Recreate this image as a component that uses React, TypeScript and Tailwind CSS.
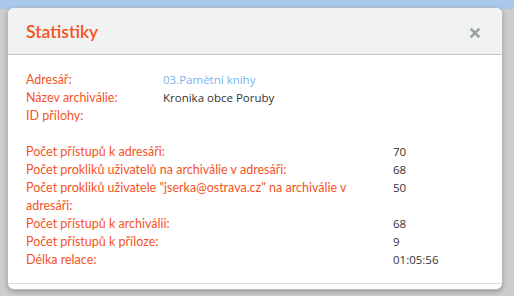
import React from "react";

const font = { fontFamily: 'Lato, "Open Sans", sans-serif' };
const valFont = { fontFamily: '"Open Sans", "Liberation Sans", sans-serif' };

function Row({ label, value, valueClass = "text-[#333]", wide = false }: { label: string; value?: string; valueClass?: string; wide?: boolean }) {
  return (
    <div className="flex">
      <div className={wide ? "w-[367px] pr-[10px] text-[#f5531f]" : "w-[137px] text-[#f5531f]"}>{label}</div>
      <div className={valueClass + " text-[11.5px]"} style={valFont}>{value}</div>
    </div>
  );
}

export default function App() {
  return (
    <div className="relative w-[514px] h-[296px] bg-[#cdcdcd] overflow-hidden" style={font}>
      <div className="absolute left-0 top-0 w-full h-[9px] bg-[#a8c9ea]" />
      <div className="relative ml-[7px] pt-[7px]">
        <div className="w-[496px] h-[283px] rounded-[7px] border border-[#b8bbbb] bg-white shadow-[0_2px_4px_rgba(0,0,0,0.25)] overflow-hidden flex flex-col">
          <div className="h-[47px] bg-[#f1f2f2] border-b border-[#c3c6c6] flex items-center justify-between pl-[18px] pr-[22px]">
            <div className="text-[17.5px] text-[#f5531f] leading-none pt-[2px] font-semibold">Statistiky</div>
            <svg width="10" height="10" viewBox="0 0 10 10" className="mt-[3px]">
              <path d="M1.5 1.5 L8.5 8.5 M8.5 1.5 L1.5 8.5" stroke="#9ca1a1" strokeWidth="2.6" strokeLinecap="square" />
            </svg>
          </div>
          <div className="flex-1 pl-[18px] pt-[16px] text-[12.5px] leading-[18px]">
            <Row label="Adresář:" value="03.Pamětní knihy" valueClass="text-[#7db4ee]" />
            <Row label="Název archiválie:" value="Kronika obce Poruby" />
            <Row label="ID přílohy:" />
            <div className="h-[18px]" />
            <Row wide label="Počet přístupů k adresáři:" value="70" />
            <Row wide label="Počet prokliků uživatelů na archiválie v adresáři:" value="68" />
            <Row wide label={'Počet prokliků uživatele "jserka@ostrava.cz" na archiválie v adresáři:'} value="50" />
            <Row wide label="Počet přístupů k archiválii:" value="68" />
            <Row wide label="Počet přístupů k příloze:" value="9" />
            <Row wide label="Délka relace:" value="01:05:56" />
          </div>
          <div className="h-[6px] border-t border-[#dcdcdc]" />
        </div>
      </div>
    </div>
  );
}
